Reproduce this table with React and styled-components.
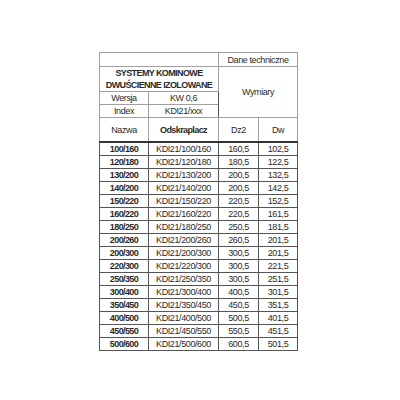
import styled, { createGlobalStyle } from "styled-components";

const GlobalStyle = createGlobalStyle`
  html, body {
    margin: 0;
    padding: 0;
    background: #ffffff;
  }
`;

const rows = [
  ["100/160", "KDI21/100/160", "160,5", "102,5"],
  ["120/180", "KDI21/120/180", "180,5", "122,5"],
  ["130/200", "KDI21/130/200", "200,5", "132,5"],
  ["140/200", "KDI21/140/200", "200,5", "142,5"],
  ["150/220", "KDI21/150/220", "220,5", "152,5"],
  ["160/220", "KDI21/160/220", "220,5", "161,5"],
  ["180/250", "KDI21/180/250", "250,5", "181,5"],
  ["200/260", "KDI21/200/260", "260,5", "201,5"],
  ["200/300", "KDI21/200/300", "300,5", "201,5"],
  ["220/300", "KDI21/220/300", "300,5", "221,5"],
  ["250/350", "KDI21/250/350", "300,5", "251,5"],
  ["300/400", "KDI21/300/400", "400,5", "301,5"],
  ["350/450", "KDI21/350/450", "450,5", "351,5"],
  ["400/500", "KDI21/400/500", "500,5", "401,5"],
  ["450/550", "KDI21/450/550", "550,5", "451,5"],
  ["500/600", "KDI21/500/600", "600,5", "501,5"],
];

export default function App() {
  return (
    <>
      <GlobalStyle />
      <Page>
        <Sheet>
          <colgroup>
            <col style={{ width: 49 }} />
            <col style={{ width: 70 }} />
            <col style={{ width: 40 }} />
            <col style={{ width: 39 }} />
          </colgroup>
          <tbody>
            <tr>
              <Cell colSpan={2} h={14} />
              <Cell colSpan={2} h={14} split>Dane techniczne</Cell>
            </tr>
            <tr>
              <Cell colSpan={2} h={24} bold>
                SYSTEMY KOMINOWE<br />DWUŚCIENNE IZOLOWANE
              </Cell>
              <Cell colSpan={2} rowSpan={3} split>Wymiary</Cell>
            </tr>
            <tr>
              <Cell h={13}>Wersja</Cell>
              <Cell h={13}>KW 0,6</Cell>
            </tr>
            <tr>
              <Cell h={13}>Index</Cell>
              <Cell h={13}>KDI21/xxx</Cell>
            </tr>
            <tr>
              <Cell h={24}>Nazwa</Cell>
              <Cell h={24} bold>Odskraplacz</Cell>
              <Cell h={24} split>Dz2</Cell>
              <Cell h={24}>Dw</Cell>
            </tr>
            {rows.map((r, i) => (
              <DataRow key={r[0]} first={i === 0}>
                <Cell h={13} bold dark>{r[0]}</Cell>
                <Cell h={13} dark>{r[1]}</Cell>
                <Cell h={13} dark split>{r[2]}</Cell>
                <Cell h={13} dark>{r[3]}</Cell>
              </DataRow>
            ))}
          </tbody>
        </Sheet>
      </Page>
    </>
  );
}

const Page = styled.div`
  width: 400px;
  height: 400px;
  box-sizing: border-box;
  padding-top: 52px;
  padding-left: 99px;
  font-family: "Liberation Sans", Arial, sans-serif;
`;

const Sheet = styled.table`
  border-collapse: collapse;
  table-layout: fixed;
  width: 198px;
  color: #2a2a2a;
  font-size: 9px;
  letter-spacing: -0.4px;
  border: 1px solid #9a9a9a;
`;

const DataRow = styled.tr`
  td {
    border-top: ${(p) => (p.first ? "2px solid #333" : "1px solid #555")};
  }
`;

const Cell = styled.td`
  height: ${(p) => (p.h ? p.h - 1 + "px" : "auto")};
  padding: 0;
  text-align: center;
  vertical-align: middle;
  white-space: nowrap;
  line-height: 12px;
  font-weight: ${(p) => (p.bold ? 700 : 400)};
  letter-spacing: ${(p) => (p.bold ? "-0.6px" : "-0.4px")};
  border: 1px solid ${(p) => (p.dark ? "#555" : "#a0a0a0")};
  border-left-color: ${(p) => (p.split ? "#555" : p.dark ? "#555" : "#a0a0a0")};
`;
